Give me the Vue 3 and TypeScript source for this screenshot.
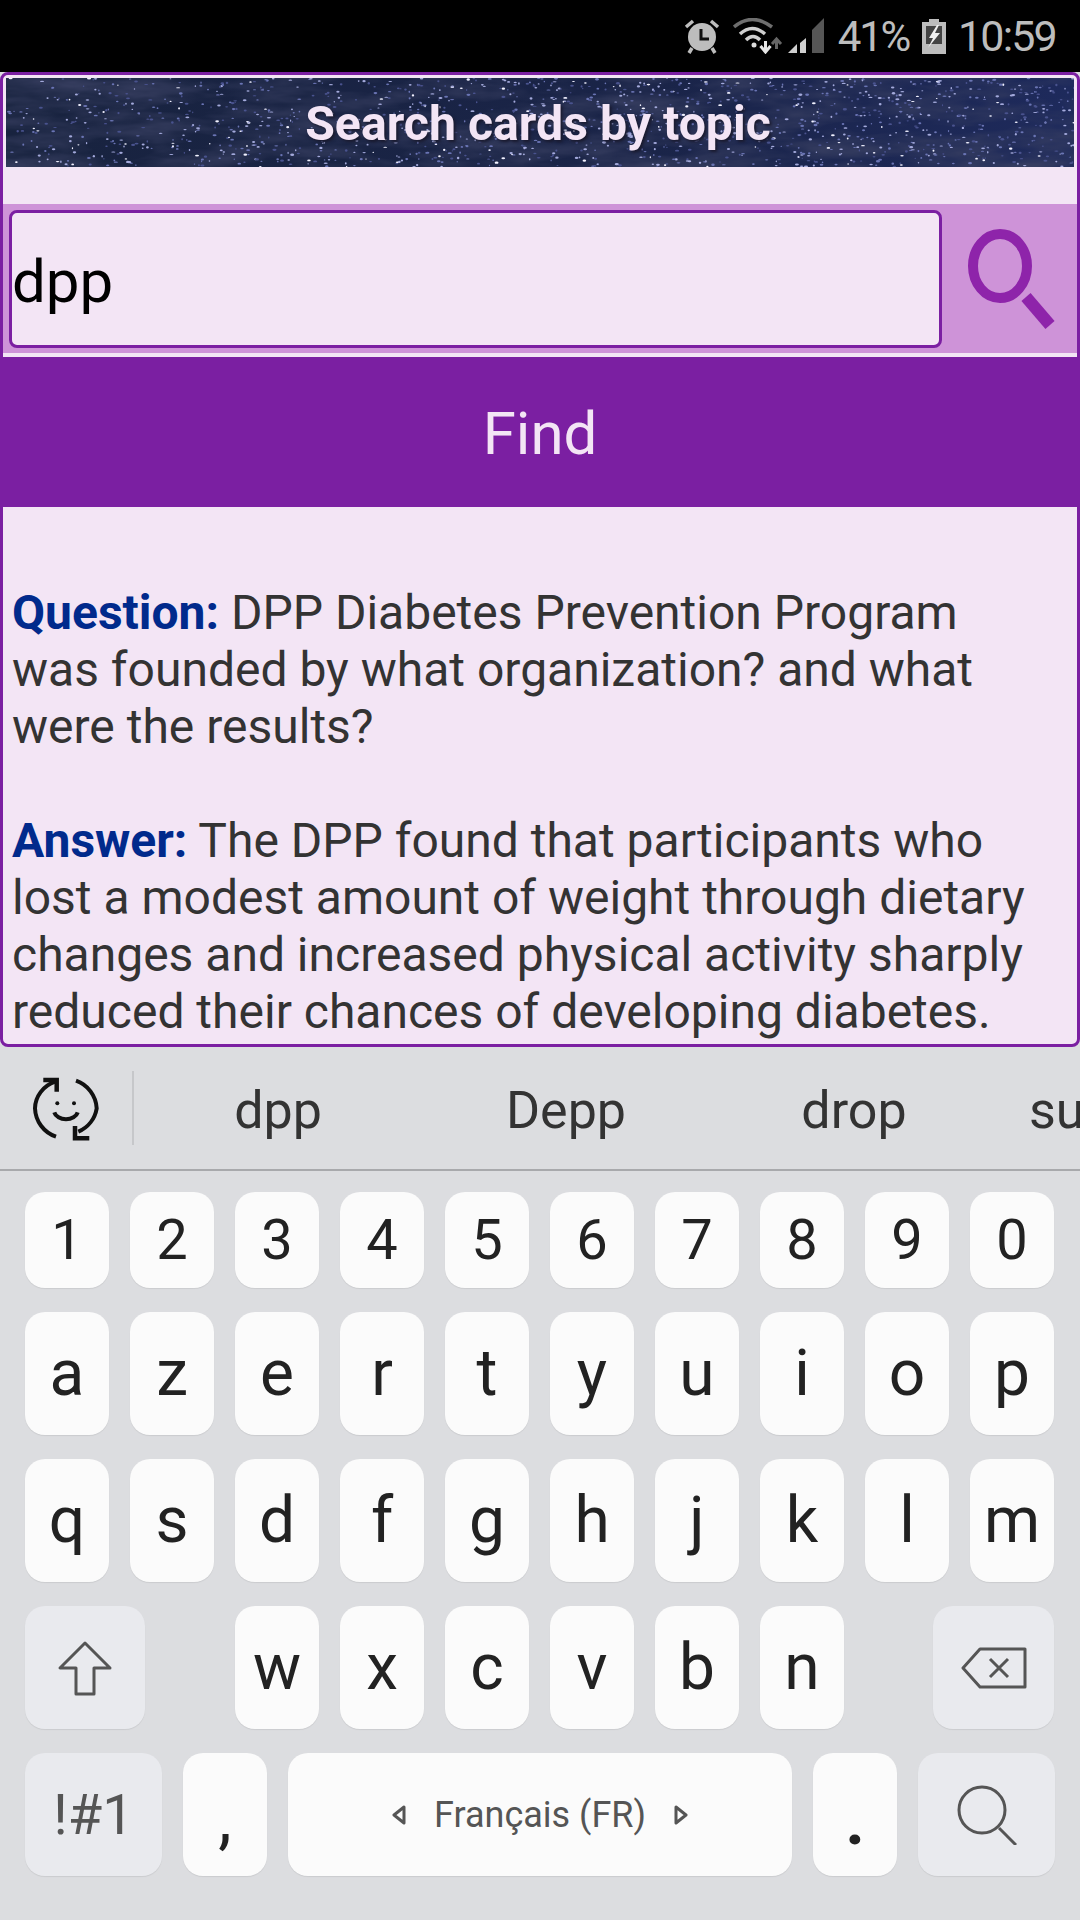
<script setup lang="ts">
// 星空背景：用固定种子生成，保证每次渲染一致
function seeded(seed: number) {
  let s = seed
  return () => {
    s = (s * 16807) % 2147483647
    return (s - 1) / 2147483646
  }
}

const rnd = seeded(4711)
const stars = Array.from({ length: 1500 }, () => {
  // 右侧星星更密一些
  const x = Math.pow(rnd(), 0.85) * 1068
  const bright = rnd()
  return {
    x,
    y: rnd() * 89,
    rx: 0.6 + rnd() * 1.5,
    ry: 0.5 + rnd() * 0.7,
    fill: bright > 0.9 ? '#f2f2ff' : bright > 0.6 ? '#a4aadc' : bright > 0.3 ? '#6a74b4' : '#49528e',
  }
})

const numberKeys = ['1', '2', '3', '4', '5', '6', '7', '8', '9', '0']
const topLetters = ['a', 'z', 'e', 'r', 't', 'y', 'u', 'i', 'o', 'p']
const midLetters = ['q', 's', 'd', 'f', 'g', 'h', 'j', 'k', 'l', 'm']
const lowLetters = ['w', 'x', 'c', 'v', 'b', 'n']
const suggestions = ['dpp', 'Depp', 'drop']
</script>

<template>
  <div class="screen">
    <div class="status">
      <svg class="st-alarm" width="36" height="36" viewBox="0 0 36 36">
        <circle cx="18" cy="19" r="14" fill="#bdbdbd" />
        <path d="M2 9 L9 3 M34 9 L27 3" stroke="#bdbdbd" stroke-width="3.5" />
        <path d="M8 30 L5 35 M28 30 L31 35" stroke="#bdbdbd" stroke-width="3.5" />
        <path d="M17 11 V21 H25" fill="none" stroke="#111" stroke-width="3" />
      </svg>
      <svg class="st-wifi" width="50" height="36" viewBox="0 0 50 36">
        <path d="M1 9 Q19 -6 39 9" fill="none" stroke="#6e6e6e" stroke-width="3.5" />
        <path d="M7 16 Q19 5 32 16" fill="none" stroke="#cfcfcf" stroke-width="3.5" />
        <path d="M13 22 Q20 15 27 22" fill="none" stroke="#cfcfcf" stroke-width="3.5" />
        <circle cx="21" cy="27" r="2.5" fill="#dcdcdc" />
        <path d="M32.5 23 V33 M27.5 28 L32.5 34 L37.5 28" fill="none" stroke="#e6e6e6" stroke-width="3" />
        <path d="M43.5 31 V22 M39 26 L43.5 21 L48 26" fill="none" stroke="#666" stroke-width="3" />
      </svg>
      <svg class="st-signal" width="36" height="36" viewBox="0 0 36 36">
        <path d="M0 35 H9 V26 Z" fill="#cfcfcf" />
        <path d="M12 35 H18 V20 L12 25 Z" fill="#cfcfcf" />
        <path d="M24 35 H36 V0 L24 12 Z" fill="#565656" />
      </svg>
      <span class="st-pct">41%</span>
      <svg class="st-batt" width="24" height="36" viewBox="0 0 24 36">
        <path d="M7 1 H17 V4 H24 V36 H0 V4 H7 Z" fill="#bdbdbd" />
        <rect x="4" y="8" width="16" height="18" fill="#444" />
        <path d="M15 7 L7 20 H11 L6 30 L18 15 H13 L17 7 Z" fill="#f0f0f0" />
      </svg>
      <span class="st-time">10:59</span>
    </div>

    <div class="frame">
      <div class="banner">
        <svg class="sky" width="1068" height="89" viewBox="0 0 1068 89" preserveAspectRatio="none">
          <defs>
            <linearGradient id="skyBase" x1="0" y1="0" x2="1" y2="0">
              <stop offset="0" stop-color="#18233f" />
              <stop offset="0.6" stop-color="#1a2448" />
              <stop offset="1" stop-color="#1e2a5c" />
            </linearGradient>
            <filter id="skyNoise" x="0" y="0" width="100%" height="100%">
              <feTurbulence type="fractalNoise" baseFrequency="0.012 0.05" numOctaves="4" seed="8" />
              <feColorMatrix values="0 0 0 0 0.04  0 0 0 0 0.05  0 0 0 0 0.12  1.8 0 0 0 -0.6" />
            </filter>
            <filter id="starSoft">
              <feGaussianBlur stdDeviation="0.5" />
            </filter>
          </defs>
          <rect width="1068" height="89" fill="url(#skyBase)" />
          <rect width="1068" height="89" filter="url(#skyNoise)" />
          <g filter="url(#starSoft)">
            <ellipse
              v-for="(star, i) in stars"
              :key="i"
              :cx="star.x"
              :cy="star.y"
              :rx="star.rx"
              :ry="star.ry"
              :fill="star.fill"
            />
          </g>
        </svg>
        <span class="banner-title">Search cards by topic</span>
      </div>

      <div class="search-row">
        <div class="search-input">dpp</div>
        <div class="search-btn">
          <svg width="90" height="104" viewBox="0 0 90 104">
            <ellipse cx="34" cy="38" rx="27" ry="32" fill="none" stroke="#8e24aa" stroke-width="10" />
            <path d="M60 69 L84 97" stroke="#8e24aa" stroke-width="12" />
          </svg>
        </div>
      </div>

      <div class="find">Find</div>

      <div class="result">
        <p><b>Question:</b> DPP Diabetes Prevention Program was founded by what organization? and what were the results?</p>
        <p><b>Answer:</b> The DPP found that participants who lost a modest amount of weight through dietary changes and increased physical activity sharply reduced their chances of developing diabetes.</p>
      </div>
    </div>

    <div class="keyboard">
      <div class="strip">
        <div class="strip-icon">
          <svg width="80" height="80" viewBox="0 0 80 80" fill="none" stroke="#111" stroke-width="4">
            <path d="M29 13.7 A31 29 0 0 0 9 40.3 A31 31 0 0 0 30 68.7" />
            <path d="M17.3 12 H30.7 V23.7" stroke-width="4.5" />
            <path d="M50 12.7 A31 31 0 0 1 70.7 40.3 A31 31 0 0 1 52.3 63.7" />
            <path d="M63.3 70.3 H49 V58" stroke-width="4.5" />
            <circle cx="31.3" cy="35.3" r="2" fill="#111" stroke="none" />
            <circle cx="48" cy="35.3" r="2" fill="#111" stroke="none" />
            <path d="M28.3 44.3 A12 9 0 0 0 51.7 44.3" />
          </svg>
        </div>
        <div v-for="word in suggestions" :key="word" class="word">{{ word }}</div>
        <div class="word word-cut">su</div>
      </div>

      <div class="keys">
        <div class="row row-num">
          <div v-for="k in numberKeys" :key="k" class="key">{{ k }}</div>
        </div>
        <div class="row">
          <div v-for="k in topLetters" :key="k" class="key letter">{{ k }}</div>
        </div>
        <div class="row">
          <div v-for="k in midLetters" :key="k" class="key letter">{{ k }}</div>
        </div>
        <div class="row">
          <div class="key mod shift">
            <svg width="56" height="56" viewBox="0 0 56 56" fill="none" stroke="#555" stroke-width="3" stroke-linejoin="round">
              <path d="M28 3 L3 28 H19 V54 H37 V28 H53 Z" />
            </svg>
          </div>
          <div v-for="k in lowLetters" :key="k" class="key letter">{{ k }}</div>
          <div class="key mod back">
            <svg width="66" height="42" viewBox="0 0 66 42" fill="none" stroke="#555" stroke-width="3" stroke-linejoin="round">
              <path d="M2 21 L19 2 H64 V40 H19 Z" />
              <path d="M29 12 L47 30 M47 12 L29 30" />
            </svg>
          </div>
        </div>
        <div class="row-bottom">
          <div class="key mod wide sym">!#1</div>
          <div class="key punct">,</div>
          <div class="key space">
            <svg width="14" height="22" viewBox="0 0 14 22" fill="none" stroke="#555" stroke-width="3" stroke-linejoin="round"><path d="M12 3 L2 11 L12 19 Z" /></svg>
            <span>Français (FR)</span>
            <svg width="14" height="22" viewBox="0 0 14 22" fill="none" stroke="#555" stroke-width="3" stroke-linejoin="round"><path d="M2 3 L12 11 L2 19 Z" /></svg>
          </div>
          <div class="key punct period">.</div>
          <div class="key mod wide">
            <svg width="60" height="60" viewBox="0 0 60 60" fill="none" stroke="#555" stroke-width="3">
              <circle cx="25" cy="25" r="23" />
              <path d="M42 43 L59 60" />
            </svg>
          </div>
        </div>
      </div>
    </div>
  </div>
</template>

<style>
html,
body {
  margin: 0;
  background: #dcdde0;
}
</style>

<style scoped>
.screen {
  width: 1080px;
  height: 1920px;
  overflow: hidden;
  display: flex;
  flex-direction: column;
  font-family: Roboto, "Noto Sans", sans-serif;
}

.status {
  height: 72px;
  flex: none;
  background: #000;
  color: #bdbdbd;
  display: flex;
  align-items: center;
  justify-content: flex-end;
  padding-right: 24px;
  box-sizing: border-box;
}

.st-wifi {
  margin-left: 13px;
}

.st-signal {
  margin-left: 5px;
}

.st-pct {
  margin-left: 14px;
  font-size: 42px;
  letter-spacing: -2.3px;
}

.st-batt {
  margin-left: 13px;
}

.st-time {
  margin-left: 12px;
  font-size: 43px;
  letter-spacing: -1.8px;
}

.frame {
  height: 975px;
  flex: none;
  box-sizing: border-box;
  border: 3px solid #7b1fa2;
  border-radius: 8px;
  background: #f3e5f5;
  overflow: hidden;
}

.banner {
  position: relative;
  margin: 3px 3px 0;
  height: 89px;
  display: flex;
  align-items: center;
  justify-content: center;
}

.sky {
  position: absolute;
  inset: 0;
}

.banner-title {
  position: relative;
  top: 1px;
  left: -2px;
  font-size: 48.2px;
  font-weight: 700;
  color: #f3e5f5;
  text-shadow: 2px 2px 3px #1a1a2e;
}

.search-row {
  margin-top: 37px;
  height: 149px;
  background: #ce93d8;
  display: flex;
  padding: 6px 0 5px 6px;
  box-sizing: border-box;
}

.search-input {
  flex: none;
  width: 933px;
  box-sizing: border-box;
  border: 3px solid #7b1fa2;
  border-radius: 8px;
  background: #f3e5f5;
  color: #000;
  font-size: 60px;
  display: flex;
  align-items: center;
  padding-top: 4px;
}

.search-btn {
  flex: 1;
  display: flex;
  align-items: center;
  justify-content: center;
  padding-left: 3px;
  padding-top: 2px;
}

.find {
  margin: 4px -3px 0;
  height: 150px;
  background: #7b1fa2;
  color: #f3e5f5;
  font-size: 60px;
  display: flex;
  align-items: center;
  justify-content: center;
  padding-top: 2px;
  box-sizing: border-box;
}

.result {
  padding: 77px 30px 0 9px;
  font-size: 48px;
  line-height: 57px;
  color: #333;
}

.result p {
  margin: 0 0 57px;
}

.result b {
  color: #012a8c;
}

.keyboard {
  flex: 1;
  background: #dcdde0;
}

.strip {
  height: 124px;
  box-sizing: border-box;
  border-bottom: 2px solid #a8a9ac;
  display: flex;
  overflow: hidden;
}

.strip-icon {
  flex: none;
  width: 134px;
  box-sizing: border-box;
  padding-left: 26px;
  display: flex;
  align-items: center;
  position: relative;
}

.strip-icon::after {
  content: "";
  position: absolute;
  right: 0;
  top: 24px;
  bottom: 24px;
  width: 2px;
  background: #c6c7ca;
}

.word {
  flex: none;
  width: 288px;
  font-size: 52px;
  color: #333;
  display: flex;
  align-items: center;
  justify-content: center;
  padding-top: 4px;
  box-sizing: border-box;
}

.word-cut {
  justify-content: flex-start;
  padding-left: 31px;
}

.keys {
  padding: 21px 26px 0 25px;
  display: flex;
  flex-direction: column;
  gap: 24px;
}

.row {
  display: grid;
  grid-template-columns: repeat(10, 1fr);
  column-gap: 21px;
  height: 123px;
}

.row-num {
  height: 96px;
}

.row-bottom {
  display: flex;
  gap: 21px;
  height: 123px;
}

.key {
  background: #fbfbfb;
  border-radius: 20px;
  box-shadow: 0 1px 1px rgba(0, 0, 0, 0.08);
  color: #222;
  font-size: 56px;
  display: flex;
  align-items: center;
  justify-content: center;
}

.letter {
  font-size: 64px;
}

.mod {
  background: #e9eaee;
}

.shift {
  grid-column: 1 / span 2;
  width: 120px;
}

.shift + .key {
  grid-column: 3;
}

.back {
  grid-column: 9 / span 2;
  justify-self: end;
  width: 121px;
}

.row-bottom .key {
  flex: none;
  width: 84px;
}

.row-bottom .wide {
  width: 137px;
}

.row-bottom .sym {
  color: #555;
  font-size: 56px;
}

.row-bottom .punct {
  font-size: 68px;
  align-items: flex-end;
  padding-bottom: 18px;
  box-sizing: border-box;
}

.row-bottom .period {
  font-weight: 700;
  padding-bottom: 15px;
}

.row-bottom .space {
  width: 504px;
  color: #555;
  font-size: 36px;
  gap: 28px;
}
</style>
